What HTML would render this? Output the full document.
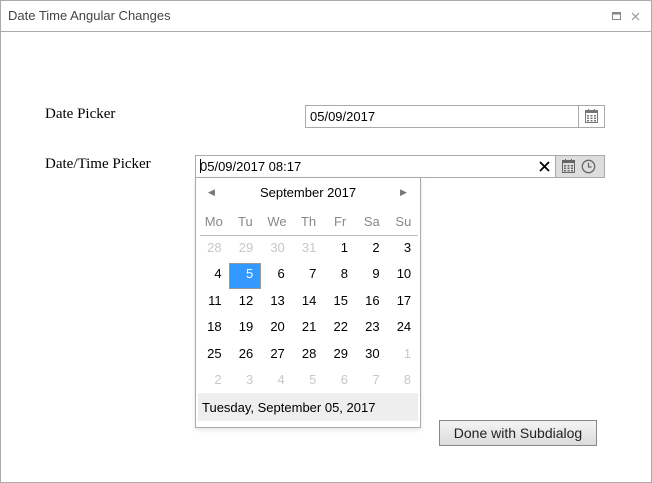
<!DOCTYPE html>
<html><head><style>
*{margin:0;padding:0;box-sizing:border-box}
body{width:652px;height:483px;background:#fff;position:relative;overflow:hidden;font-family:"Liberation Sans",Arial,sans-serif;font-size:13px;color:#000}
.a{position:absolute}
.win{left:0;top:0;width:652px;height:483px;border:1px solid #aaa}
.title{left:8px;top:8px;font-size:13px;color:#444}
.lbl{font-family:"Liberation Serif",serif;font-size:15px}
.inp{border:1px solid #aaa;background:#fff}
.cell{width:31.6px;height:26.4px;line-height:26px;text-align:right;padding-right:8px;font-size:13px}
.g{color:#c8c8c8}
.dn{width:31.6px;text-align:center;color:#888;font-size:13px}
</style></head><body>
<div class="a win"></div>
<div class="a title">Date Time Angular Changes</div>
<div class="a" style="left:0;top:31px;width:652px;height:1px;background:#aaa"></div>
<svg class="a" style="left:612px;top:12px" width="10" height="9"><rect x="0.5" y="0.5" width="8" height="7" fill="none" stroke="#888"/><rect x="0.5" y="0.5" width="8" height="2" fill="#888"/></svg>
<svg class="a" style="left:631px;top:12px" width="9" height="9"><path d="M1 1L8 8M8 1L1 8" stroke="#999" stroke-width="1.2"/></svg>

<div class="a lbl" style="left:45px;top:106px">Date Picker</div>
<div class="a lbl" style="left:45px;top:156px">Date/Time Picker</div>

<div class="a inp" style="left:305px;top:105px;width:300px;height:23px"></div>
<div class="a" style="left:310px;top:109px">05/09/2017</div>
<div class="a" style="left:578px;top:106px;width:1px;height:21px;background:#aaa"></div>
<svg class="a" style="left:585px;top:109px" width="13" height="14"><rect x="0.5" y="1.5" width="12" height="12" fill="none" stroke="#777"/><rect x="0.5" y="1.5" width="12" height="2.5" fill="#777"/><path d="M2 6h2v1.5H2zM5.5 6h2v1.5h-2zM9 6h2v1.5H9zM2 8.5h2V10H2zM5.5 8.5h2V10h-2zM9 8.5h2V10H9zM2 11h2v1.5H2zM5.5 11h2v1.5h-2zM9 11h2v1.5H9z" fill="#777"/><path d="M3.5 0v2M9.5 0v2" stroke="#777"/></svg>

<div class="a inp" style="left:195px;top:155px;width:410px;height:23px"></div>
<div class="a" style="left:555px;top:156px;width:49px;height:21px;background:#ddd;border-left:1px solid #aaa"></div>
<div class="a" style="left:200px;top:159px;width:1px;height:14px;background:#000"></div>
<div class="a" style="left:200px;top:159px">05/09/2017 08:17</div>
<svg class="a" style="left:539px;top:161px" width="11" height="11"><path d="M1 1L10 10M10 1L1 10" stroke="#000" stroke-width="1.8"/></svg>
<svg class="a" style="left:562px;top:159px" width="13" height="14"><rect x="0.5" y="1.5" width="12" height="12" fill="none" stroke="#666"/><rect x="0.5" y="1.5" width="12" height="2.5" fill="#666"/><path d="M2 6h2v1.5H2zM5.5 6h2v1.5h-2zM9 6h2v1.5H9zM2 8.5h2V10H2zM5.5 8.5h2V10h-2zM9 8.5h2V10H9zM2 11h2v1.5H2zM5.5 11h2v1.5h-2zM9 11h2v1.5H9z" fill="#666"/><path d="M3.5 0v2M9.5 0v2" stroke="#666"/></svg>
<svg class="a" style="left:581px;top:159px" width="15" height="15"><circle cx="7.5" cy="7.5" r="6.2" fill="none" stroke="#666" stroke-width="1.3"/><path d="M7.5 3.8V8H10.5" fill="none" stroke="#666" stroke-width="1.2"/></svg>

<div class="a" style="left:195px;top:177px;width:226px;height:251px;border:1px solid #aaa;background:#fff;box-shadow:0 2px 4px rgba(0,0,0,.1)"></div>
<div class="a" style="left:208px;top:187px;font-size:9px;color:#777">◀</div>
<div class="a" style="left:400px;top:187px;font-size:9px;color:#777">▶</div>
<div class="a" style="left:198px;top:185px;width:220px;text-align:center">September 2017</div>
<div class="a" style="left:200px;top:235px;width:218px;height:1px;background:#bbb"></div>
<div class="a" style="left:198px;top:214px;display:flex">
<div class="dn">Mo</div><div class="dn">Tu</div><div class="dn">We</div><div class="dn">Th</div><div class="dn">Fr</div><div class="dn">Sa</div><div class="dn">Su</div></div>
<div class="a" style="left:229px;top:263px;width:32px;height:26px;background:#3399ff;border:1px solid #999"></div>
<div class="a" style="left:198px;top:235px;width:222px;display:flex;flex-wrap:wrap">
<div class="cell g">28</div><div class="cell g">29</div><div class="cell g">30</div><div class="cell g">31</div><div class="cell">1</div><div class="cell">2</div><div class="cell">3</div>
<div class="cell">4</div><div class="cell" style="color:#fff">5</div><div class="cell">6</div><div class="cell">7</div><div class="cell">8</div><div class="cell">9</div><div class="cell">10</div>
<div class="cell">11</div><div class="cell">12</div><div class="cell">13</div><div class="cell">14</div><div class="cell">15</div><div class="cell">16</div><div class="cell">17</div>
<div class="cell">18</div><div class="cell">19</div><div class="cell">20</div><div class="cell">21</div><div class="cell">22</div><div class="cell">23</div><div class="cell">24</div>
<div class="cell">25</div><div class="cell">26</div><div class="cell">27</div><div class="cell">28</div><div class="cell">29</div><div class="cell">30</div><div class="cell g">1</div>
<div class="cell g">2</div><div class="cell g">3</div><div class="cell g">4</div><div class="cell g">5</div><div class="cell g">6</div><div class="cell g">7</div><div class="cell g">8</div>
</div>
<div class="a" style="left:198px;top:393px;width:220px;height:28px;background:#eee;padding:7px 0 0 4px">Tuesday, September 05, 2017</div>

<div class="a" style="left:439px;top:420px;width:158px;height:26px;border:1px solid #888;background:linear-gradient(#f4f4f4,#dcdcdc);text-align:center;line-height:24px;color:#222;font-size:14px">Done with Subdialog</div>
</body></html>
